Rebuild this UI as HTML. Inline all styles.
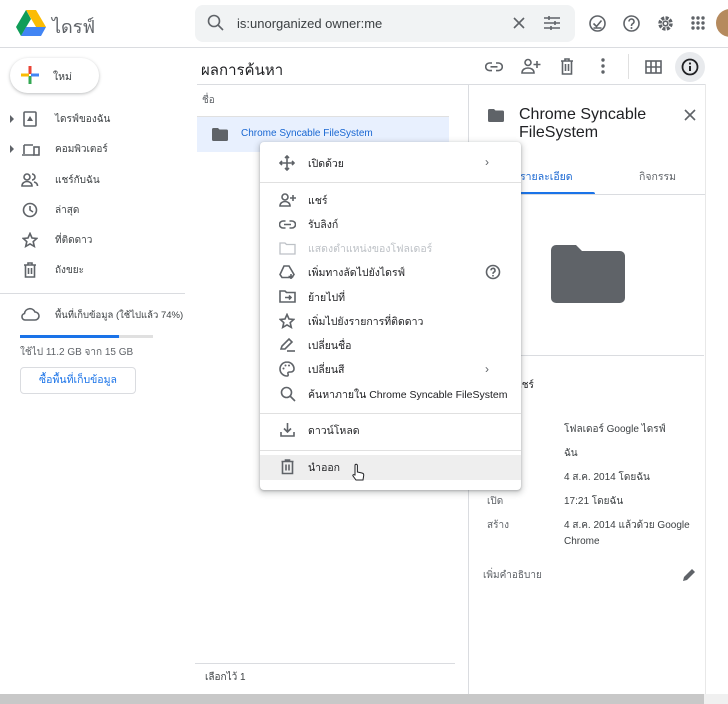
<!DOCTYPE html>
<html><head><meta charset="utf-8"><style>
*{box-sizing:border-box;margin:0;padding:0}
body{width:728px;height:704px;overflow:hidden;background:#fff;font-family:"Liberation Sans","DejaVu Sans",sans-serif;color:#202124;position:relative;font-size:11px}
.a{position:absolute;white-space:nowrap}
svg{position:absolute}
.ic{fill:none;stroke:#5f6368;stroke-width:1.6}
.t{font-size:10.5px;color:#3c4043}
.mi{font-size:10.5px;color:#202124}
</style></head><body>
<!-- header -->
<svg style="left:16px;top:10px" width="30" height="26" viewBox="0 0 30 26"><path d="M10 0h10l10 17h-10z" fill="#fbbc04"/><path d="M10 0L0 17l5 9 10-17z" fill="#0f9d58"/><path d="M5 26h20l5-9H10z" fill="#4285f4"/><path d="M15 9l-5 8h10z" fill="#fff" opacity=".3"/></svg>
<div class="a" style="left:52px;top:12px;font-size:18px;color:#5f6368">ไดรฟ์</div>
<div class="a" style="left:195px;top:5px;width:380px;height:37px;background:#f1f3f4;border-radius:8px"></div>
<svg style="left:206px;top:13px" width="20" height="20" viewBox="0 0 20 20"><circle cx="8" cy="8" r="5.5" class="ic" stroke-width="2"/><path d="M12 12l5 5" class="ic" stroke-width="2"/></svg>
<div class="a" style="left:237px;top:16px;font-size:13px;color:#3c4043">is:unorganized owner:me</div>
<svg style="left:512px;top:16px" width="14" height="14"><path d="M2 2l10 10M12 2L2 12" class="ic" stroke-width="1.8"/></svg>
<svg style="left:543px;top:15px" width="18" height="16"><path d="M1 3h16M1 8h16M1 13h16M6 1v4M12 6v4M8 11v4" class="ic" stroke-width="1.5"/></svg>
<svg style="left:588px;top:14px" width="19" height="19"><circle cx="9.5" cy="9.5" r="7.5" class="ic" stroke-width="1.7"/><path d="M5.5 9.5l3 3 5-6M5.5 14h8" class="ic" stroke-width="1.5"/></svg>
<svg style="left:622px;top:14px" width="19" height="19"><circle cx="9.5" cy="9.5" r="7.5" class="ic" stroke-width="1.7"/><path d="M7 7.5a2.5 2.5 0 1 1 3.5 2.3c-1 .5-1 1-1 2.2" class="ic" stroke-width="1.6"/><circle cx="9.5" cy="14" r="1" fill="#5f6368"/></svg>
<svg style="left:656px;top:14px" width="19" height="19" viewBox="0 0 19 19"><circle cx="9.5" cy="9.5" r="5.5" fill="none" stroke="#5f6368" stroke-width="3.5" stroke-dasharray="3 1.3"/><circle cx="9.5" cy="9.5" r="2.3" fill="#fff" stroke="#5f6368" stroke-width="1.6"/></svg>
<svg style="left:690px;top:15px" width="16" height="16"><g fill="#5f6368"><circle cx="3" cy="3" r="1.7"/><circle cx="8" cy="3" r="1.7"/><circle cx="13" cy="3" r="1.7"/><circle cx="3" cy="8" r="1.7"/><circle cx="8" cy="8" r="1.7"/><circle cx="13" cy="8" r="1.7"/><circle cx="3" cy="13" r="1.7"/><circle cx="8" cy="13" r="1.7"/><circle cx="13" cy="13" r="1.7"/></g></svg>
<div class="a" style="left:716px;top:9px;width:28px;height:28px;border-radius:50%;background:#b58a5e"></div>
<div class="a" style="left:0;top:47px;width:728px;height:1px;background:#dadce0"></div>
<!-- sidebar -->
<div class="a" style="left:10px;top:58px;width:89px;height:35px;border-radius:18px;background:#fff;box-shadow:0 1px 3px rgba(60,64,67,.35)"></div>
<svg style="left:20px;top:65px" width="20" height="20"><path d="M10 1v8" stroke="#ea4335" stroke-width="3"/><path d="M10 11v8" stroke="#34a853" stroke-width="3"/><path d="M1 10h8" stroke="#fbbc04" stroke-width="3"/><path d="M11 10h8" stroke="#4285f4" stroke-width="3"/></svg>
<div class="a t" style="left:53px;top:68px">ใหม่</div>
<svg style="left:9px;top:115px" width="6" height="8"><path d="M1 0l4 4-4 4z" fill="#5f6368"/></svg>
<svg style="left:9px;top:145px" width="6" height="8"><path d="M1 0l4 4-4 4z" fill="#5f6368"/></svg>
<svg style="left:23px;top:111px" width="14" height="16"><rect x="1" y="1" width="12" height="14" rx="1" class="ic"/><path d="M4 10h6l-3-5z" fill="#5f6368"/></svg>
<svg style="left:22px;top:143px" width="18" height="14"><path d="M2 2h9M2 2v9M0 12h12" class="ic"/><rect x="12" y="4" width="5" height="8" class="ic"/></svg>
<svg style="left:21px;top:173px" width="18" height="14"><circle cx="6" cy="4" r="3" class="ic"/><path d="M1 13c0-3 2.5-4.5 5-4.5s5 1.5 5 4.5zM11 1a3 3 0 0 1 0 6M13 9c2 .5 3.5 2 3.5 4" class="ic"/></svg>
<svg style="left:22px;top:202px" width="16" height="16"><circle cx="8" cy="8" r="6.5" class="ic"/><path d="M8 4v4l3 2" class="ic"/></svg>
<svg style="left:22px;top:232px" width="16" height="16"><path d="M8 1.5l2 4.5 4.8.4-3.6 3.2 1.1 4.8L8 11.9 3.7 14.4l1.1-4.8L1.2 6.4 6 6z" class="ic" stroke-width="1.3"/></svg>
<svg style="left:23px;top:262px" width="14" height="16"><path d="M1 3h12M5 3V1h4v2M2.5 3v12h9V3M5.5 6v6M8.5 6v6" class="ic" stroke-width="1.4"/></svg>
<div class="a t" style="left:55px;top:112px;font-size:10px">ไดรฟ์ของฉัน</div>
<div class="a t" style="left:55px;top:142px;font-size:10px">คอมพิวเตอร์</div>
<div class="a t" style="left:55px;top:173px;font-size:10px">แชร์กับฉัน</div>
<div class="a t" style="left:55px;top:203px;font-size:10px">ล่าสุด</div>
<div class="a t" style="left:55px;top:233px;font-size:10px">ที่ติดดาว</div>
<div class="a t" style="left:55px;top:263px;font-size:10px">ถังขยะ</div>
<div class="a" style="left:0;top:293px;width:185px;height:1px;background:#dadce0"></div>
<svg style="left:20px;top:307px" width="20" height="14"><path d="M5 13h10a4 4 0 0 0 0-8 5.5 5.5 0 0 0-10.5 1.5A3.3 3.3 0 0 0 5 13z" class="ic" stroke-width="1.4"/></svg>
<div class="a t" style="left:55px;top:308px;font-size:9.5px">พื้นที่เก็บข้อมูล (ใช้ไปแล้ว 74%)</div>
<div class="a" style="left:20px;top:335px;width:133px;height:3px;background:#e0e0e0"></div>
<div class="a" style="left:20px;top:335px;width:99px;height:3px;background:#1a73e8"></div>
<div class="a" style="left:20px;top:345px;font-size:10px;color:#5f6368">ใช้ไป 11.2 GB จาก 15 GB</div>
<div class="a" style="left:20px;top:367px;width:116px;height:27px;border:1px solid #dadce0;border-radius:4px;color:#1a73e8;font-size:10.5px;text-align:center;line-height:24px">ซื้อพื้นที่เก็บข้อมูล</div>
<!-- main -->
<div class="a" style="left:201px;top:58px;font-size:15px;color:#202124">ผลการค้นหา</div>
<svg style="left:485px;top:61px" width="18" height="12"><path d="M7 2H4.5a3.8 3.8 0 0 0 0 7.6H7M11 2h2.5a3.8 3.8 0 0 1 0 7.6H11M5.5 5.8h7" class="ic" stroke-width="1.6"/></svg>
<svg style="left:521px;top:58px" width="20" height="16"><circle cx="7" cy="4.5" r="3" class="ic" stroke-width="1.4"/><path d="M1 15c0-3.5 3-5 6-5s6 1.5 6 5z" class="ic" stroke-width="1.4"/><path d="M16 3v7M12.5 6.5h7" class="ic" stroke-width="1.4"/></svg>
<svg style="left:560px;top:58px" width="14" height="17"><path d="M1 3h12M5 3V1h4v2M2.5 3v13h9V3M5.5 6v7M8.5 6v7" class="ic" stroke-width="1.4"/></svg>
<svg style="left:601px;top:58px" width="4" height="16"><g fill="#5f6368"><circle cx="2" cy="2" r="1.7"/><circle cx="2" cy="8" r="1.7"/><circle cx="2" cy="14" r="1.7"/></g></svg>
<div class="a" style="left:628px;top:54px;width:1px;height:25px;background:#e0e0e0"></div>
<svg style="left:645px;top:60px" width="17" height="14"><rect x="1" y="1" width="15" height="12" class="ic" stroke-width="1.5"/><path d="M6 1v12M11 1v12M1 7h15" class="ic" stroke-width="1.5"/></svg>
<div class="a" style="left:675px;top:52px;width:30px;height:30px;border-radius:50%;background:#e8eaed"></div>
<svg style="left:681px;top:58px" width="18" height="18"><circle cx="9" cy="9" r="7.5" fill="none" stroke="#202124" stroke-width="1.8"/><path d="M9 8v5" stroke="#202124" stroke-width="2"/><circle cx="9" cy="5.5" r="1.1" fill="#202124"/></svg>
<div class="a" style="left:197px;top:84px;width:508px;height:1px;background:#dadce0"></div>
<div class="a" style="left:468px;top:84px;width:1px;height:610px;background:#dadce0"></div>
<div class="a" style="left:705px;top:84px;width:1px;height:610px;background:#e8e8e8"></div>
<div class="a" style="left:202px;top:93px;font-size:10px;color:#5f6368">ชื่อ</div>
<div class="a" style="left:197px;top:116px;width:252px;height:1px;background:#e0e0e0"></div>
<div class="a" style="left:197px;top:117px;width:252px;height:35px;background:#e8f0fe"></div>
<svg style="left:212px;top:128px" width="16" height="13"><path d="M0 1.5A1.5 1.5 0 0 1 1.5 0H6l1.5 1.5h7A1.5 1.5 0 0 1 16 3v8.5a1.5 1.5 0 0 1-1.5 1.5h-13A1.5 1.5 0 0 1 0 11.5z" fill="#5f6368"/></svg>
<div class="a" style="left:241px;top:128px;font-size:10px;color:#1967d2">Chrome Syncable FileSystem</div>
<div class="a" style="left:195px;top:663px;width:260px;height:1px;background:#dadce0"></div>
<div class="a" style="left:205px;top:670px;font-size:10px;color:#3c4043">เลือกไว้ 1</div>
<!-- details -->
<svg style="left:488px;top:109px" width="16" height="13"><path d="M0 1.5A1.5 1.5 0 0 1 1.5 0H6l1.5 1.5h7A1.5 1.5 0 0 1 16 3v8.5a1.5 1.5 0 0 1-1.5 1.5h-13A1.5 1.5 0 0 1 0 11.5z" fill="#5f6368"/></svg>
<div class="a" style="left:519px;top:106px;font-size:16px;line-height:18px;color:#202124">Chrome Syncable<br>FileSystem</div>
<svg style="left:684px;top:109px" width="12" height="12"><path d="M1 1l10 10M11 1L1 11" class="ic" stroke-width="1.5"/></svg>
<div class="a" style="left:520px;top:168px;font-size:10.5px;color:#1967d2">รายละเอียด</div>
<div class="a" style="left:639px;top:168px;font-size:10.5px;color:#5f6368">กิจกรรม</div>
<div class="a" style="left:519px;top:192px;width:76px;height:3px;background:#1a73e8;border-radius:2px 2px 0 0"></div>
<div class="a" style="left:469px;top:194px;width:236px;height:1px;background:#dadce0"></div>
<svg style="left:551px;top:245px" width="74" height="58"><path d="M0 5A5 5 0 0 1 5 0h20l6 6h38a5 5 0 0 1 5 5v42a5 5 0 0 1-5 5H5a5 5 0 0 1-5-5z" fill="#5f6368"/></svg>
<div class="a" style="left:482px;top:355px;width:222px;height:1px;background:#dadce0"></div>
<div class="a" style="left:484px;top:378px;font-size:10px;color:#202124">ผู้มีสิทธิ์แชร์</div>
<div class="a t" style="left:564px;top:422px;font-size:10px">โฟลเดอร์ Google ไดรฟ์</div>
<div class="a t" style="left:564px;top:446px;font-size:10px">ฉัน</div>
<div class="a t" style="left:564px;top:470px;font-size:10px">4 ส.ค. 2014 โดยฉัน</div>
<div class="a" style="left:487px;top:494px;font-size:10px;color:#5f6368">เปิด</div>
<div class="a t" style="left:564px;top:494px;font-size:10px">17:21 โดยฉัน</div>
<div class="a" style="left:487px;top:518px;font-size:10px;color:#5f6368">สร้าง</div>
<div class="a t" style="left:564px;top:518px;font-size:10px;line-height:16px">4 ส.ค. 2014 แล้วด้วย Google<br>Chrome</div>
<div class="a" style="left:483px;top:568px;font-size:10px;color:#5f6368">เพิ่มคำอธิบาย</div>
<svg style="left:682px;top:567px" width="15" height="15"><path d="M1 14l1-4 8-8 3 3-8 8z" fill="#5f6368"/></svg>
<!-- menu -->
<div class="a" style="left:260px;top:142px;width:261px;height:348px;background:#fff;border-radius:4px;box-shadow:0 2px 6px 2px rgba(60,64,67,.2),0 1px 2px rgba(60,64,67,.3)"></div>
<div class="a" style="left:260px;top:455px;width:261px;height:25px;background:#eeeeee"></div>
<div class="a" style="left:260px;top:182px;width:261px;height:1px;background:#e0e0e0"></div>
<div class="a" style="left:260px;top:413px;width:261px;height:1px;background:#e0e0e0"></div>
<div class="a" style="left:260px;top:450px;width:261px;height:1px;background:#e0e0e0"></div>
<svg style="left:279px;top:155px" width="16" height="16"><path d="M8 1v14M1 8h14M6 3l2-2 2 2M6 13l2 2 2-2M3 6L1 8l2 2M13 6l2 2-2 2" class="ic" stroke-width="1.3"/></svg>
<svg style="left:279px;top:193px" width="18" height="14"><circle cx="6" cy="4" r="3" class="ic" stroke-width="1.3"/><path d="M1 13c0-3 2.5-4.5 5-4.5s5 1.5 5 4.5z" class="ic" stroke-width="1.3"/><path d="M14 2v6M11 5h6" class="ic" stroke-width="1.3"/></svg>
<svg style="left:279px;top:220px" width="17" height="10"><path d="M6.5 1H4a3.5 3.5 0 0 0 0 7h2.5M10.5 1H13a3.5 3.5 0 0 1 0 7h-2.5M5 4.5h7" class="ic" stroke-width="1.4"/></svg>
<svg style="left:279px;top:242px" width="17" height="13"><path d="M1 1h5l1.5 1.5H16V12H1z" fill="none" stroke="#bdc1c6" stroke-width="1.3"/></svg>
<svg style="left:279px;top:264px" width="17" height="16"><path d="M5 2h5l5 8.5-2 3H3l-2-3z" class="ic" stroke-width="1.3"/><path d="M12 10v5M9.5 12.5h5" class="ic" stroke-width="1.3"/></svg>
<svg style="left:279px;top:290px" width="17" height="13"><path d="M1 1h5l1.5 1.5H16V12H1z" class="ic" stroke-width="1.3"/><path d="M6 7.5h6M10 5.5l2 2-2 2" class="ic" stroke-width="1.3"/></svg>
<svg style="left:279px;top:313px" width="16" height="16"><path d="M8 1.5l2 4.5 4.8.4-3.6 3.2 1.1 4.8L8 11.9 3.7 14.4l1.1-4.8L1.2 6.4 6 6z" class="ic" stroke-width="1.2"/></svg>
<svg style="left:280px;top:337px" width="16" height="16"><path d="M1 12l1-3 7-7 3 3-7 7z" class="ic" stroke-width="1.3"/><path d="M7 14h8" class="ic" stroke-width="1.8"/></svg>
<svg style="left:279px;top:361px" width="16" height="16"><path d="M8 1a7 7 0 0 0 0 14c1.2 0 1.5-1 1-2s0-2 1.5-2H12a3 3 0 0 0 3-3c0-4-3.2-7-7-7z" class="ic" stroke-width="1.3"/><circle cx="4.5" cy="7.5" r="1" fill="#5f6368"/><circle cx="6.5" cy="4.5" r="1" fill="#5f6368"/><circle cx="10" cy="4.5" r="1" fill="#5f6368"/></svg>
<svg style="left:280px;top:386px" width="16" height="16"><circle cx="6.5" cy="6.5" r="5" class="ic" stroke-width="1.5"/><path d="M10 10l5 5" class="ic" stroke-width="1.6"/></svg>
<svg style="left:280px;top:422px" width="15" height="15"><path d="M7.5 1v9M4 6.5l3.5 3.5 3.5-3.5M1 10v4h13v-4" class="ic" stroke-width="1.4"/></svg>
<svg style="left:281px;top:459px" width="13" height="16"><path d="M0.5 2.5h12M4.5 2.5V1h4v1.5M1.5 2.5v12h10v-12M5 5.5v6M8 5.5v6" class="ic" stroke-width="1.3"/></svg>
<div class="a mi" style="left:308px;top:155px">เปิดด้วย</div>
<div class="a mi" style="left:308px;top:192px">แชร์</div>
<div class="a mi" style="left:308px;top:216px">รับลิงก์</div>
<div class="a mi" style="left:308px;top:240px;color:#bdc1c6">แสดงตำแหน่งของโฟลเดอร์</div>
<div class="a mi" style="left:308px;top:264px">เพิ่มทางลัดไปยังไดรฟ์</div>
<div class="a mi" style="left:308px;top:289px">ย้ายไปที่</div>
<div class="a mi" style="left:308px;top:313px">เพิ่มไปยังรายการที่ติดดาว</div>
<div class="a mi" style="left:308px;top:337px">เปลี่ยนชื่อ</div>
<div class="a mi" style="left:308px;top:361px">เปลี่ยนสี</div>
<div class="a mi" style="left:308px;top:386px">ค้นหาภายใน Chrome Syncable FileSystem</div>
<div class="a mi" style="left:308px;top:422px">ดาวน์โหลด</div>
<div class="a mi" style="left:308px;top:459px">นำออก</div>
<div class="a" style="left:485px;top:155px;font-size:12px;color:#5f6368">›</div>
<div class="a" style="left:485px;top:362px;font-size:12px;color:#5f6368">›</div>
<svg style="left:485px;top:264px" width="16" height="16"><circle cx="8" cy="8" r="6.5" class="ic" stroke-width="1.4"/><path d="M6 6.3a2 2 0 1 1 2.8 1.9c-.8.4-.8.8-.8 1.7" class="ic" stroke-width="1.3"/><circle cx="8" cy="11.8" r=".9" fill="#5f6368"/></svg>
<svg style="left:351px;top:463px" width="14" height="20"><path d="M4 12V2.5a1.2 1.2 0 0 1 2.4 0V9l4.5 1c1.3.3 2 1.2 1.8 2.5L12 17H5l-3-4c-.6-.8.4-1.8 1.2-1.2z" fill="#fff" stroke="#202124" stroke-width="1"/></svg>
<!-- scrollbar -->
<div class="a" style="left:0;top:694px;width:728px;height:10px;background:#c8c8c8"></div>
<div class="a" style="left:704px;top:694px;width:24px;height:10px;background:#f0f0f0"></div>
</body></html>
